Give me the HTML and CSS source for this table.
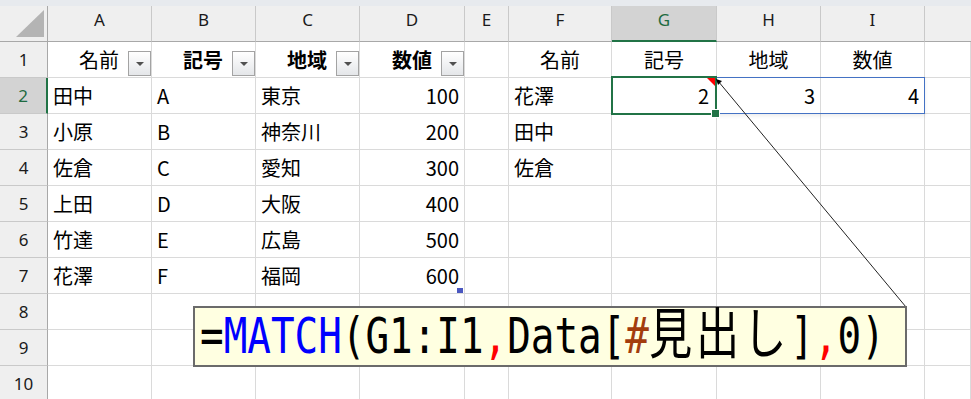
FILE: index.html
```html
<!DOCTYPE html>
<html lang="ja">
<head>
<meta charset="utf-8">
<title>MATCH</title>
<link rel="stylesheet" href="styles.css">
</head>
<body>
<div class="app">
  <div class="strip"></div>
  <div class="sheet">
    <div class="hd corner"><span class="tri"></span></div>
    <div class="hd">A</div><div class="hd">B</div><div class="hd">C</div><div class="hd">D</div><div class="hd">E</div><div class="hd">F</div><div class="hd sel">G</div><div class="hd">H</div><div class="hd">I</div><div class="hd last"></div>

    <div class="rh">1</div>
    <div class="c r th"><span>名前</span><span class="dd"></span></div>
    <div class="c r th b"><span>記号</span><span class="dd"></span></div>
    <div class="c r th b"><span>地域</span><span class="dd"></span></div>
    <div class="c r th b"><span>数値</span><span class="dd"></span></div>
    <div class="c"></div>
    <div class="c m">名前</div><div class="c m">記号</div><div class="c m">地域</div><div class="c m">数値</div><div class="c"></div>

    <div class="rh sel">2</div>
    <div class="c">田中</div><div class="c">A</div><div class="c">東京</div><div class="c r">100</div><div class="c"></div>
    <div class="c">花澤</div><div class="c r g2">2</div><div class="c r">3</div><div class="c r">4</div><div class="c"></div>

    <div class="rh">3</div>
    <div class="c">小原</div><div class="c">B</div><div class="c">神奈川</div><div class="c r">200</div><div class="c"></div>
    <div class="c">田中</div><div class="c"></div><div class="c"></div><div class="c"></div><div class="c"></div>

    <div class="rh">4</div>
    <div class="c">佐倉</div><div class="c">C</div><div class="c">愛知</div><div class="c r">300</div><div class="c"></div>
    <div class="c">佐倉</div><div class="c"></div><div class="c"></div><div class="c"></div><div class="c"></div>

    <div class="rh">5</div>
    <div class="c">上田</div><div class="c">D</div><div class="c">大阪</div><div class="c r">400</div><div class="c"></div>
    <div class="c"></div><div class="c"></div><div class="c"></div><div class="c"></div><div class="c"></div>

    <div class="rh">6</div>
    <div class="c">竹達</div><div class="c">E</div><div class="c">広島</div><div class="c r">500</div><div class="c"></div>
    <div class="c"></div><div class="c"></div><div class="c"></div><div class="c"></div><div class="c"></div>

    <div class="rh">7</div>
    <div class="c">花澤</div><div class="c">F</div><div class="c">福岡</div><div class="c r tend">600<span class="handle"></span></div><div class="c"></div>
    <div class="c"></div><div class="c"></div><div class="c"></div><div class="c"></div><div class="c"></div>

    <div class="rh">8</div>
    <div class="c"></div><div class="c"></div><div class="c"></div><div class="c"></div><div class="c"></div>
    <div class="c"></div><div class="c"></div><div class="c"></div><div class="c"></div><div class="c"></div>

    <div class="rh">9</div>
    <div class="c"></div><div class="c"></div><div class="c"></div><div class="c"></div><div class="c"></div>
    <div class="c"></div><div class="c"></div><div class="c"></div><div class="c"></div><div class="c"></div>

    <div class="rh">10</div>
    <div class="c"></div><div class="c"></div><div class="c"></div><div class="c"></div><div class="c"></div>
    <div class="c"></div><div class="c"></div><div class="c"></div><div class="c"></div><div class="c"></div>
  </div>

  <div class="range-box"></div>
  <div class="sel-box"><span class="fill"></span></div>

  <svg class="overlay" width="971" height="399" viewBox="0 0 971 399">
    <polygon points="707,78 715,78 715,86" fill="#ff0000"/>
    <line x1="718" y1="81" x2="906" y2="307" stroke="#222" stroke-width="1"/>
    <polygon points="716,79 722,81 718,85" fill="#000"/>
  </svg>

  <div class="callout">
    <span class="formula">=<span class="fn">MATCH</span>(G1:I1<span class="sep">,</span>Data[<span class="hash">#</span><span class="jp">見出し</span>]<span class="sep">,</span>0)</span>
  </div>
</div>
</body>
</html>
```
FILE: styles.css
```css
html, body {
  margin: 0;
  padding: 0;
  background: #ffffff;
}

.app {
  position: relative;
  width: 971px;
  height: 399px;
  overflow: hidden;
  font-family: "Noto Sans CJK JP", "Noto Sans", sans-serif;
}

.strip {
  height: 6px;
  background: #e7eaee;
}

.sheet {
  display: grid;
  grid-template-columns: 48px 104px 104px 104px 105px 44px 103px 105px 104px 104px 1fr;
  grid-template-rows: repeat(11, 36px);
}

.hd {
  box-sizing: border-box;
  background: #efefef;
  border-right: 1px solid #c9c9c9;
  border-bottom: 1px solid #a8a8a8;
  display: flex;
  align-items: center;
  justify-content: center;
  padding-bottom: 8px;
  font-family: "Noto Sans", sans-serif;
  font-size: 17px;
  color: #1a1a1a;
}

.hd.last {
  border-right: none;
}

.hd.sel {
  background: #d3d3d3;
  color: #1e6b41;
  border-bottom: 2px solid #217346;
  padding-bottom: 7px;
}

.corner {
  position: relative;
  border-right: 1px solid #a8a8a8;
  padding: 0;
}

.tri {
  position: absolute;
  left: 16px;
  top: 4px;
  width: 0;
  height: 0;
  border-left: 28px solid transparent;
  border-bottom: 27px solid #b4b4b4;
}

.rh {
  box-sizing: border-box;
  background: #efefef;
  border-right: 1px solid #a8a8a8;
  border-bottom: 1px solid #c9c9c9;
  display: flex;
  align-items: center;
  justify-content: center;
  font-family: "Noto Sans", sans-serif;
  font-size: 17px;
  color: #1a1a1a;
}

.rh.sel {
  background: #d3d3d3;
  color: #1e6b41;
  border-right: 2px solid #217346;
}

.c {
  box-sizing: border-box;
  border-right: 1px solid #dadada;
  border-bottom: 1px solid #dadada;
  display: flex;
  align-items: center;
  padding: 0 5px;
  font-size: 20px;
  color: #000;
  white-space: nowrap;
}

.c.r {
  justify-content: flex-end;
}

.c.m {
  justify-content: center;
}

.c.th {
  padding-right: 0;
  gap: 9px;
}

.c.b span:first-child {
  font-weight: 700;
}

.g2 {
  padding-right: 7px;
}

.dd {
  align-self: flex-end;
  margin-bottom: 1px;
  box-sizing: border-box;
  width: 23px;
  height: 25px;
  border: 1px solid #a3a3a3;
  background: linear-gradient(#ffffff, #e4e6e9);
  display: flex;
  align-items: center;
  justify-content: center;
}

.dd::after {
  content: "";
  width: 0;
  height: 0;
  border-left: 4px solid transparent;
  border-right: 4px solid transparent;
  border-top: 4px solid #505050;
  margin-top: 1px;
}

.tend {
  position: relative;
}

.handle {
  position: absolute;
  right: 1px;
  bottom: 0;
  width: 6px;
  height: 5px;
  background: #4a57c0;
}

.range-box {
  position: absolute;
  left: 716px;
  top: 77px;
  width: 209px;
  height: 37px;
  box-sizing: border-box;
  border: 1px solid #4472c4;
  box-shadow: 0 2px 4px rgba(0, 0, 0, 0.08);
}

.sel-box {
  position: absolute;
  left: 611px;
  top: 76px;
  width: 106px;
  height: 39px;
  box-sizing: border-box;
  border: 2px solid #217346;
}

.fill {
  position: absolute;
  right: -5px;
  bottom: -5px;
  width: 7px;
  height: 7px;
  background: #217346;
  border: 1px solid #ffffff;
}

.overlay {
  position: absolute;
  left: 0;
  top: 0;
  pointer-events: none;
}

.callout {
  position: absolute;
  left: 193px;
  top: 306px;
  width: 714px;
  height: 61px;
  box-sizing: border-box;
  border: 2px solid #6b6b6b;
  background: #ffffe1;
  padding-left: 5px;
  line-height: 56px;
  white-space: nowrap;
}

.formula {
  display: inline-block;
  font-family: "DejaVu Sans Mono", "Liberation Mono", monospace;
  font-size: 50px;
  color: #000;
  transform: scaleX(0.785);
  transform-origin: left center;
}

.fn {
  color: #0000ff;
}

.sep {
  color: #ff0000;
}

.hash {
  color: #a33d0d;
}

.jp {
  font-family: "Noto Sans CJK JP", sans-serif;
  font-size: 55px;
  letter-spacing: 5px;
  line-height: 40px;
}
```
